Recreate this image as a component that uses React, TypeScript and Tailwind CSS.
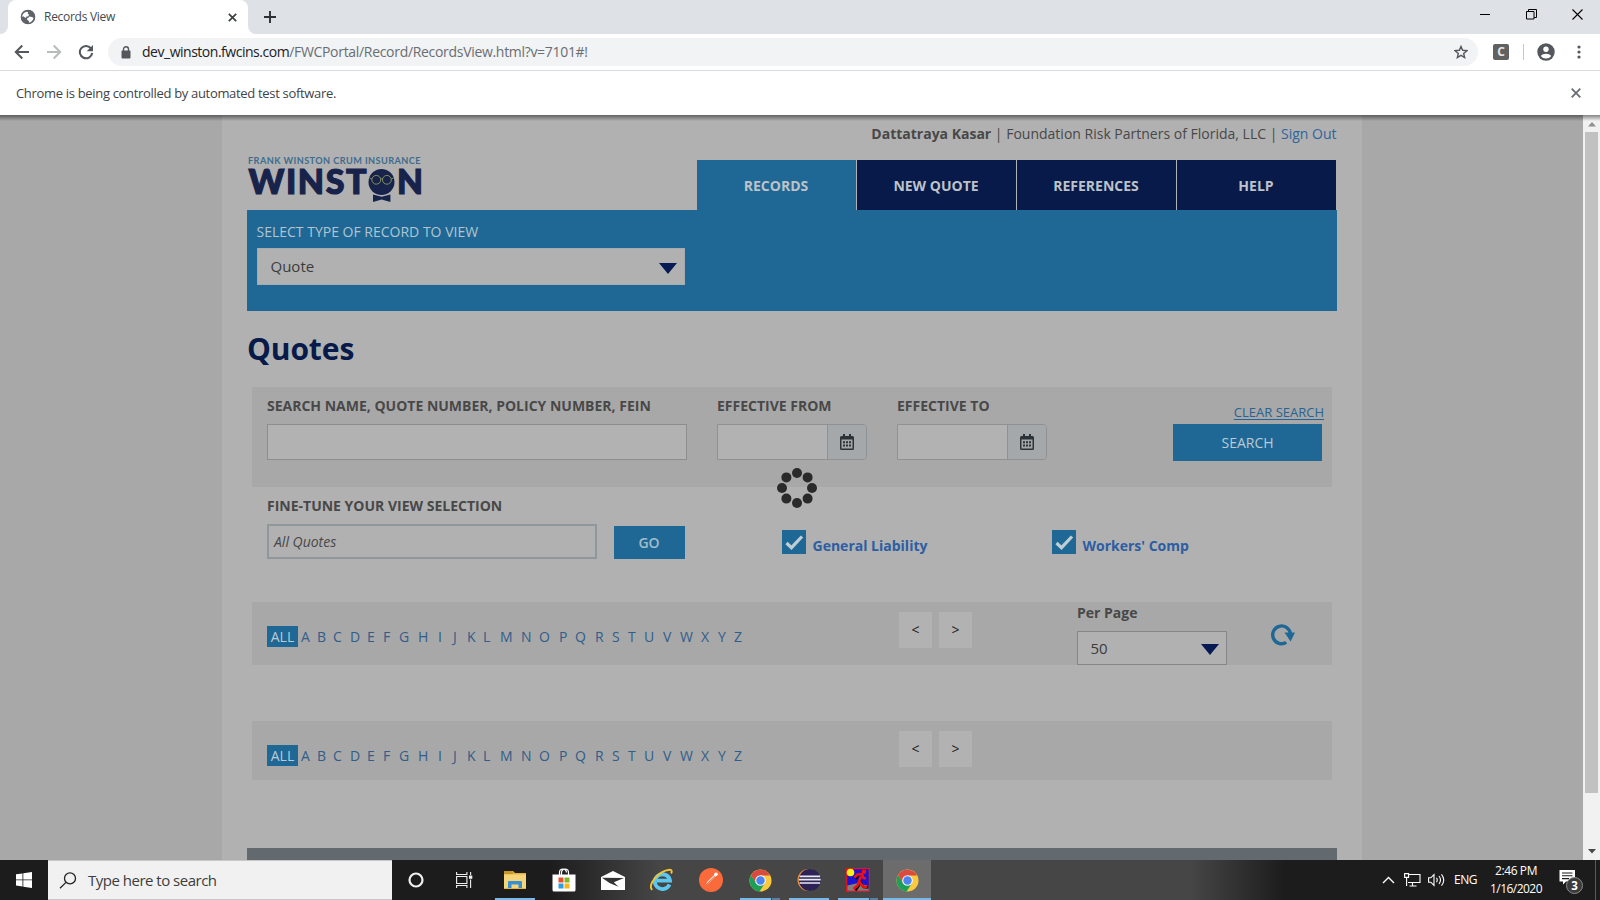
import type { ReactNode } from "react";

const LETTERS = "ABCDEFGHIJKLMNOPQRSTUVWXYZ".split("");

function TabStrip() {
  return (
    <div className="flex h-[34px] items-stretch bg-[#dee1e6]">
      <div className="flex w-2 items-end bg-white">
        <div className="h-full w-2 rounded-br-lg bg-[#dee1e6]" />
      </div>
      <div className="flex w-[240px] items-center rounded-t-lg bg-white pl-3 pr-2">
        <svg width="16" height="16" viewBox="0 0 16 16">
          <circle cx="8" cy="8" r="7" fill="#5f6368" />
          <path d="M3 4.6 6 2.7l2.2.2-.6 1.6L9 5.6l-.6 1.6-1.8.3-1 1.4-2.4-1.6L1.8 8 2 6z" fill="#fff" />
          <path d="M9.2 7.4 12 8l1.8 1-.8 2-2.2 2.2-1.6.9-.4-2.1-1.8-1.4.3-1.7 1.4-.4z" fill="#fff" />
          <circle cx="8" cy="8" r="6.6" fill="none" stroke="#5f6368" strokeWidth="1.4" />
        </svg>
        <span className="ml-2 text-[12px] tracking-[-0.28px] text-[#45494d]">Records View</span>
        <svg className="ml-auto mr-[3px]" width="9" height="9" viewBox="0 0 9 9" stroke="#3c4043" strokeWidth="1.7">
          <path d="M.8.8l7.4 7.4M8.2.8.8 8.2" />
        </svg>
      </div>
      <div className="flex w-2 bg-white">
        <div className="h-full w-2 rounded-bl-lg bg-[#dee1e6]" />
      </div>
      <div className="flex w-7 items-center justify-center">
        <svg width="12" height="12" viewBox="0 0 12 12" stroke="#2d3034" strokeWidth="1.9">
          <path d="M6 0v12M0 6h12" />
        </svg>
      </div>
      <div className="ml-auto flex items-start pt-[9px]">
        <svg className="mr-[36px]" width="10" height="11" stroke="#000" strokeWidth="1">
          <path d="M0 5.5h10" />
        </svg>
        <svg className="mr-[35px]" width="11" height="11" fill="none" stroke="#000" strokeWidth="1">
          <path d="M.5 2.5h7.500v7.500H.5zM2.500 2.500v-2h8v8H8" />
        </svg>
        <svg className="mr-[17px]" width="11" height="11" stroke="#000" strokeWidth="1.1">
          <path d="M.5.5l10 10M10.500.5l-10 10" />
        </svg>
      </div>
    </div>
  );
}

function Toolbar() {
  return (
    <div className="flex h-9 items-center bg-white pl-[14px]">
      <svg width="16" height="16" viewBox="0 0 16 16" fill="none" stroke="#54575b" strokeWidth="2">
        <path d="M15 8H2M8.300 1.500 1.800 8l6.500 6.500" />
      </svg>
      <svg className="ml-4" width="16" height="16" viewBox="0 0 16 16" fill="none" stroke="#b9bbbd" strokeWidth="2">
        <path d="M1 8h13M7.700 1.500 14.200 8l-6.500 6.500" />
      </svg>
      <svg className="ml-4" width="16" height="16" viewBox="0 0 16 16">
        <path d="M13.200 4.600A6.200 6.200 0 1 0 14.200 9" fill="none" stroke="#54575b" strokeWidth="2" />
        <path d="M15 1v6.300H8.700z" fill="#54575b" />
      </svg>
      <div className="ml-[14px] flex h-7 w-[1370px] items-center rounded-full bg-[#f1f3f4] pl-[13px] pr-[10px]">
        <svg width="10" height="13" viewBox="0 0 10 13">
          <rect x="0.500" y="4.500" width="9" height="8" rx="1" fill="#54575b" />
          <path d="M2.500 5V3.200a2.500 2.500 0 0 1 5 0V5" fill="none" stroke="#54575b" strokeWidth="1.400" />
        </svg>
        <div className="ml-[11px] pb-px whitespace-pre text-[14px]">
          <span className="tracking-[-0.48px] text-[#202124]">dev_winston.fwcins.com</span>
          <span className="tracking-[-0.31px] text-[#6a6e73]">/FWCPortal/Record/RecordsView.html?v=7101#!</span>
        </div>
        <svg className="ml-auto" width="14" height="14" viewBox="0 0 14 14" fill="none" stroke="#54575b" strokeWidth="1.400">
          <path d="M7 1.400l1.650 3.900 4.250.36-3.230 2.780.98 4.150L7 10.380l-3.650 2.210.98-4.150L1.100 5.660l4.250-.36z" />
        </svg>
      </div>
      <div className="ml-[15px] flex h-4 w-4 items-center justify-center rounded-[2px] bg-[#616161] text-[12px] leading-none font-bold text-[#e6e6e6]">
        C
      </div>
      <div className="ml-[14px] h-4 w-px bg-[#c6c9cc]" />
      <svg className="ml-[13px]" width="18" height="18" viewBox="0 0 18 18">
        <circle cx="9" cy="9" r="8.700" fill="#54575b" />
        <circle cx="9" cy="6.300" r="2.700" fill="#fff" />
        <path d="M3.800 12.900C5 11.400 7 10.700 9 10.700s4 .7 5.200 2.200A6.300 6.300 0 0 1 9 15.500a6.300 6.300 0 0 1-5.200-2.600z" fill="#fff" />
      </svg>
      <svg className="ml-[22px]" width="4" height="14" viewBox="0 0 4 14" fill="#54575b">
        <circle cx="2" cy="2" r="1.600" />
        <circle cx="2" cy="7" r="1.600" />
        <circle cx="2" cy="12" r="1.600" />
      </svg>
    </div>
  );
}

function InfoBar() {
  return (
    <div className="flex h-[45px] items-center border-t border-[#d9dbdd] bg-white pl-4 pr-[19px]">
      <span className="pt-[2px] text-[13px] tracking-[-0.32px] text-[#3f4246]">
        Chrome is being controlled by automated test software.
      </span>
      <svg className="ml-auto" width="10" height="10" viewBox="0 0 10 10" stroke="#6b6e72" strokeWidth="1.800">
        <path d="M.7.7l8.600 8.600M9.300.7.7 9.300" />
      </svg>
    </div>
  );
}

function Logo() {
  return (
    <svg width="176" height="48" viewBox="0 0 176 48">
      <text x="1" y="7.500" textLength="173" lengthAdjust="spacingAndGlyphs" fontFamily="Lato" fontWeight="700" fontSize="8.600" letterSpacing="0.400" fill="#3e6c8e">
        FRANK WINSTON CRUM INSURANCE
      </text>
      <g fontFamily="Lato" fontWeight="900" fontSize="34" fill="#18234b" stroke="#18234b" strokeWidth="1.200">
        <text x="1.500" y="37.500" textLength="118" lengthAdjust="spacing">
          WINST
        </text>
        <text x="150" y="37.500" textLength="26" lengthAdjust="spacingAndGlyphs">
          N
        </text>
      </g>
      <circle cx="134.500" cy="26" r="13" fill="#18234b" />
      <g fill="none" stroke="#8f9a5c" strokeWidth="0.900">
        <circle cx="129.300" cy="23.800" r="4.400" />
        <circle cx="139.900" cy="23.800" r="4.400" />
        <path d="M133.700 23.200q.9-.9 1.800 0M124.900 23.200l-2.600-1.500M144.300 23.200l2.600-1.500" />
      </g>
      <path d="M126 38.500l8.700 2.300 8.700-2.300V46l-8.700-2.400L126 46z" fill="#18234b" />
    </svg>
  );
}

function NavTab({ children, active = false }: { children: ReactNode; active?: boolean }) {
  return (
    <div
      className={
        active
          ? "flex h-[50px] w-[159px] items-center justify-center bg-[#1f6895] pt-px pr-px"
          : "flex h-[50px] w-[159px] items-center justify-center bg-[#071a49] pt-px pr-px"
      }
    >
      {children}
    </div>
  );
}

function Caret() {
  return (
    <svg width="18" height="11" viewBox="0 0 18 11">
      <path d="M0 0h18L9 11z" fill="#071a53" />
    </svg>
  );
}

function DateField({ label }: { label: string }) {
  return (
    <div className="w-[150px]">
      <div className="h-[37px] pt-[9px] font-bold whitespace-nowrap">{label}</div>
      <div className="flex h-9 overflow-hidden rounded-r-[4px] border border-[#8f9192]">
        <div className="w-[110px] border-r border-[#8f9192] bg-[#b2b2b2]" />
        <div className="flex flex-1 items-center justify-center bg-[#a5a8aa]">
          <svg className="mr-px" width="14" height="16" viewBox="0 0 14 16">
            <path d="M1.500 2h11A1.500 1.500 0 0 1 14 3.500v11a1.500 1.500 0 0 1-1.500 1.500h-11A1.500 1.500 0 0 1 0 14.500v-11A1.500 1.500 0 0 1 1.500 2zM3 0h2v3H3zM9 0h2v3H9z" fill="#2c3338" />
            <path d="M1.500 5.500h11v9h-11z" fill="#a4a7a9" />
            <path d="M3 7.200h2v2H3zM6 7.200h2v2H6zM9 7.200h2v2H9zM3 10.500h2v2H3zM6 10.500h2v2H6zM9 10.500h2v2H9z" fill="#2c3338" />
          </svg>
        </div>
      </div>
    </div>
  );
}

function CheckItem({ label }: { label: string }) {
  return (
    <div className="flex w-[270px] items-start">
      <div className="flex h-6 w-6 items-center justify-center bg-[#1f6895]">
        <svg width="19" height="15" viewBox="0 0 19 15" fill="none" stroke="#c0cdd4" strokeWidth="3.200">
          <path d="M1.500 8l5 4.700L17 1.500" />
        </svg>
      </div>
      <span className="ml-[6.500px] pt-[6px] font-bold text-[#2d5da3]">{label}</span>
    </div>
  );
}

function Alphabet() {
  return (
    <div className="flex h-[21px] items-center">
      <div className="flex h-[21px] w-[31px] items-center justify-center bg-[#1f6895] text-[#bccad3]">ALL</div>
      <div className="ml-[3px] grid grid-cols-[16px_16px_17px_17px_16px_16px_19px_20px_15px_14px_16px_17px_21px_18px_20px_16px_20px_17px_16px_16px_19px_17px_21px_17px_16px_12px] text-[#315d8a]">
        {LETTERS.map((l) => (
          <span key={l}>{l}</span>
        ))}
      </div>
    </div>
  );
}

function Pager() {
  return (
    <div className="flex gap-[7px] text-[#222]">
      <div className="flex h-9 w-[33px] items-center justify-center bg-[#b2b2b2]">&lt;</div>
      <div className="flex h-9 w-[33px] items-center justify-center bg-[#b2b2b2]">&gt;</div>
    </div>
  );
}

function Spinner() {
  return (
    <svg className="absolute top-[353px] left-[777px]" width="40" height="40" viewBox="-20 -20 40 40" fill="#2a2a2a">
      {[0, 45, 90, 135, 180, 225, 270, 315].map((a) => (
        <circle key={a} cx="0" cy="-15" r="5" transform={`rotate(${a})`} />
      ))}
    </svg>
  );
}

function Page() {
  return (
    <div className="relative flex h-[745px] overflow-hidden bg-[#a8a8a8] text-[14px] leading-[20px] text-[#484848]">
      <div className="ml-[222px] w-[1140px] bg-[#b1b1b1] pl-[25px]">
        <div className="w-[1090px]">
          <div className="flex h-[95px]">
            <div className="pt-[41px]">
              <Logo />
            </div>
            <div className="ml-auto flex flex-col items-end">
              <div className="h-[45px] pt-[9px] pr-[0.500px] whitespace-pre">
                <b>Dattatraya Kasar</b> | Foundation Risk Partners of Florida, LLC |{" "}
                <span className="text-[#2f659c]">Sign Out</span>
              </div>
              <div className="mr-px flex gap-px font-bold text-[#bdc2c9]">
                <NavTab active>RECORDS</NavTab>
                <NavTab>NEW QUOTE</NavTab>
                <NavTab>REFERENCES</NavTab>
                <NavTab>HELP</NavTab>
              </div>
            </div>
          </div>

          <div className="h-[101px] bg-[#1f6895] pt-3 pl-[9px]">
            <div className="pl-[0.500px] text-[#b4c4ce]">SELECT TYPE OF RECORD TO VIEW</div>
            <div className="mt-[6px] ml-px flex h-[37px] w-[428px] items-center border border-[#a5abae] bg-[#b1b1b1] pr-[7px] pl-[12.500px] text-[15px] text-[#3c3c3c]">
              <span className="pb-px">Quote</span>
              <span className="ml-auto pt-[3px]">
                <Caret />
              </span>
            </div>
          </div>

          <h1 className="h-[76px] pt-[18px] text-[30px] leading-[40px] font-bold tracking-[-0.100px] text-[#071a49]">
            Quotes
          </h1>

          <div className="mx-[5px]">
            <div className="flex h-[100px] bg-[#a8a8a8] pl-[15px]">
              <div className="w-[420px]">
                <div className="h-[37px] pt-[9px] font-bold whitespace-nowrap">
                  SEARCH NAME, QUOTE NUMBER, POLICY NUMBER, FEIN
                </div>
                <div className="h-9 border border-[#8b8d8e] bg-[#b2b2b2]" />
              </div>
              <div className="ml-[30px] flex gap-[30px]">
                <DateField label="EFFECTIVE FROM" />
                <DateField label="EFFECTIVE TO" />
              </div>
              <div className="mr-[8px] ml-auto flex flex-col items-end">
                <div className="h-[37px] pt-[15px] text-[13px] text-[#276393] underline underline-offset-2">CLEAR SEARCH</div>
                <div className="mr-[2px] flex h-[37px] w-[149px] items-center justify-center bg-[#1f6895] text-[#bccad3]">
                  SEARCH
                </div>
              </div>
            </div>

            <div className="flex h-[115px] pl-[15px]">
              <div className="w-[330px]">
                <div className="h-[37px] pt-[9px] font-bold">FINE-TUNE YOUR VIEW SELECTION</div>
                <div className="flex h-[35px] items-center border-2 border-[#90979a] pt-px pl-[5px] italic">All Quotes</div>
              </div>
              <div className="mt-[39px] ml-[17px] flex h-[33px] w-[71px] items-center justify-center bg-[#1f6895] pr-px font-semibold text-[#a3bccb]">
                GO
              </div>
              <div className="ml-[97px] flex pt-[43px]">
                <CheckItem label="General Liability" />
                <CheckItem label="Workers' Comp" />
              </div>
            </div>

            <div className="flex h-[63px] bg-[#a8a8a8] pl-[15px]">
              <div className="w-[632px] pt-6">
                <Alphabet />
              </div>
              <div className="pt-[10px]">
                <Pager />
              </div>
              <div className="ml-[105px] w-[150px]">
                <div className="h-[29px] pt-[1px] font-bold">Per Page</div>
                <div className="flex h-[34px] items-center border border-[#858788] bg-[#b1b1b1] pr-[7px] pl-[12.500px] text-[15px] text-[#3c3c3c]">
                  <span>50</span>
                  <span className="ml-auto pt-[2px]">
                    <Caret />
                  </span>
                </div>
              </div>
              <svg className="mt-[21px] ml-[43px]" width="26" height="24" viewBox="0 0 26 24">
                <path d="M16.300 19.400A8.900 8.900 0 1 1 20.400 10.500" fill="none" stroke="#1f6895" strokeWidth="3.400" />
                <path d="M14.500 9.500H25L20.600 18.500z" fill="#1f6895" />
              </svg>
            </div>

            <div className="mt-14 flex h-[59px] bg-[#a8a8a8] pl-[15px]">
              <div className="w-[632px] pt-6">
                <Alphabet />
              </div>
              <div className="pt-[10px]">
                <Pager />
              </div>
            </div>
          </div>

          <div className="mt-[68px] h-[12px] bg-[#626a70]" />
        </div>
      </div>

      <div className="ml-auto flex w-[17px] flex-col items-center bg-[#f1f1f1]">
        <svg className="mt-[7px]" width="8" height="5">
          <path d="M4 0l4 4.500H0z" fill="#8f8f8f" />
        </svg>
        <div className="mt-[5px] h-[661px] w-[13px] bg-[#c1c1c1]" />
        <svg className="mt-auto mb-[6px]" width="8" height="5">
          <path d="M0 0h8L4 4.500z" fill="#4a4a4a" />
        </svg>
      </div>

      <div className="absolute inset-x-0 top-0 h-[6px] bg-gradient-to-b from-black/45 to-transparent" />
      <Spinner />
    </div>
  );
}

function ChromeIcon() {
  return (
    <svg width="23" height="23" viewBox="0 0 24 24">
      <circle cx="12" cy="12" r="11.500" fill="#fbc93d" />
      <path d="M2.040 6.250A11.500 11.500 0 0 0 11 23.450L16.800 14.500 7.500 14.500z" fill="#1c9f58" />
      <path d="M2.040 6.250L7.200 14.500 12 6.800 21.960 6.800A11.500 11.500 0 0 0 2.040 6.250z" fill="#db4a3f" />
      <circle cx="12" cy="12" r="5.600" fill="#f4f4f4" />
      <circle cx="12" cy="12" r="4.400" fill="#4a84f0" />
    </svg>
  );
}

function AppSlot({ children, line, active = false }: { children: ReactNode; line?: "full" | "stack"; active?: boolean }) {
  return (
    <div className={active ? "flex h-10 w-12 flex-col bg-[#6c6c6c]" : "flex h-10 w-12 flex-col"}>
      <div className="flex h-[38px] items-center justify-center pt-[2px]">{children}</div>
      {line && (
        <div className={active ? "flex h-[2px]" : "mx-1 flex h-[2px] gap-px"}>
          <div className="flex-1 bg-[#76b9ed]" />
          {line === "stack" && <div className="w-2 bg-[#5583a5]" />}
        </div>
      )}
    </div>
  );
}

function Taskbar() {
  return (
    <div className="flex h-10 items-center bg-[linear-gradient(90deg,#1c1c1c_0,#1c1c1c_550px,#464646_660px,#464646_1190px,#1c1c1c_1285px,#1c1c1c_1600px)] text-white">
      <div className="flex h-10 w-12 items-center justify-center">
        <svg width="16" height="16" viewBox="0 0 16 16" fill="#fff">
          <path d="M0 2.300l6.500-.9v6.100H0zM7.300 1.300L16 0v7.500H7.300zM0 8.300h6.500v6.200L0 13.600zM7.300 8.300H16V16l-8.700-1.300z" />
        </svg>
      </div>
      <div className="flex h-10 w-[344px] items-center border-y border-[#c8c8c8] bg-[#f1f1f1] pl-[11px]">
        <svg width="18" height="17" viewBox="0 0 18 17" fill="none" stroke="#222" strokeWidth="1.300">
          <circle cx="11" cy="6.400" r="5.500" />
          <path d="M7 10.400L1 16.200" />
        </svg>
        <span className="ml-[11px] text-[15px] tracking-[-0.500px] text-[#3d3d3d]">Type here to search</span>
      </div>
      <div className="flex h-10 w-12 items-center justify-center">
        <svg width="16" height="16" viewBox="0 0 16 16">
          <circle cx="8" cy="8" r="6.500" fill="none" stroke="#f0f0f0" strokeWidth="2.200" />
        </svg>
      </div>
      <div className="flex h-10 w-12 items-center justify-center">
        <svg width="17" height="16" viewBox="0 0 17 16" fill="none" stroke="#f0f0f0" strokeWidth="1.100">
          <path d="M.6 4.500h10.300v7H.6zM.6 0v2.500h10.300V0M.6 16v-2.500h10.300V16M14.600 0v3M14.600 7.500V16" />
          <path d="M13 3.500h3.300v3.300H13z" fill="#f0f0f0" stroke="none" />
        </svg>
      </div>
      <div className="ml-[3px] flex gap-px">
        <AppSlot line="full">
          <svg width="22" height="20" viewBox="0 0 22 20">
            <path d="M0 1h9l2 2h11v16H0z" fill="#e3b341" />
            <path d="M0 4.500h22V18H0z" fill="#f6d47a" />
            <path d="M0 1h8l1.500 2L8 4H0z" fill="#c9962a" />
            <path d="M4 12q0-1 1-1h12q1 0 1 1v6h-3.500v-3.500h-7V18H4z" fill="#3a8fd0" />
          </svg>
        </AppSlot>
        <AppSlot>
          <svg width="24" height="24" viewBox="0 0 24 24">
            <path d="M7.500 7V4.500a3.500 3.500 0 0 1 7 0M9.500 7V4.500a3.500 3.500 0 0 1 7 0V7" fill="none" stroke="#fff" strokeWidth="1.200" />
            <path d="M.5 6.500h23V22q0 1.500-1.500 1.500H2Q.5 23.500.5 22z" fill="#fff" />
            <path d="M6.500 9.500h5v5h-5z" fill="#e8502f" />
            <path d="M12.500 9.500h5v5h-5z" fill="#7db728" />
            <path d="M6.500 15.500h5v5h-5z" fill="#2b9fe0" />
            <path d="M12.500 15.500h5v5h-5z" fill="#f8b61c" />
          </svg>
        </AppSlot>
        <AppSlot>
          <svg width="24" height="19" viewBox="0 0 24 19">
            <path d="M0 6L12 0l12 6v13H0z" fill="#fff" />
            <path d="M1 6.800l22 .2-10.200 4.200 4.700 4.600L8.500 12z" fill="#333" />
          </svg>
        </AppSlot>
        <AppSlot>
          <svg width="24" height="24" viewBox="0 0 24 24">
            <path d="M19.500 16.500A7.600 7.400 0 1 1 20 12.600H7" fill="none" stroke="#5cc8ef" strokeWidth="3.800" />
            <path d="M2.200 21.800C-2.500 17 8 2.800 19.500 1.700c2.500-.1 2.600 1.800 1.600 3.800" fill="none" stroke="#f2c333" strokeWidth="1.900" />
          </svg>
        </AppSlot>
        <AppSlot>
          <svg width="24" height="24" viewBox="0 0 24 24">
            <circle cx="12" cy="12" r="12" fill="#fb6a3a" />
            <path d="M6 18l2.500-4.500 7-7 1.500 1.800-7.500 7.200z" fill="#fdd9cb" />
            <circle cx="17" cy="6.300" r="1.800" fill="#fff" />
            <path d="M6.500 17.500L16 8.500" stroke="#c44f27" strokeWidth="0.800" />
          </svg>
        </AppSlot>
        <AppSlot line="stack">
          <ChromeIcon />
        </AppSlot>
        <AppSlot line="full">
          <svg width="24" height="24" viewBox="0 0 24 24">
            <circle cx="11.500" cy="12" r="11" fill="#f0943a" />
            <circle cx="12.800" cy="12" r="11" fill="#2c2255" />
            <path d="M2.500 8.300h20.600M1.900 11.700h21.800M2.500 15h20.600" stroke="#e9e9f2" strokeWidth="1.700" />
          </svg>
        </AppSlot>
        <AppSlot line="stack">
          <svg width="24" height="24" viewBox="0 0 24 24">
            <path d="M.7.700h22.600v22.600H.7z" fill="#1c14cf" stroke="#e01818" strokeWidth="1.300" />
            <path d="M1.300 17.500L12 15l10.700 3v4.700H1.300z" fill="#857d78" />
            <circle cx="4.500" cy="4.500" r="3.800" fill="#ffee1a" />
            <path d="M9.500 22.500l3.500-5 2-6M14.500 14.500l3 4.500 5 .5M9.500 11l3-3.500" fill="none" stroke="#111" strokeWidth="2.400" />
            <path d="M7.500 21l4-3.500 3.500-9M13.500 14l3.500 4.500 4 .5M8.500 9.500l3-3 4.500-.5 1.500 4 2.500.5" fill="none" stroke="#f01212" strokeWidth="2.500" />
            <circle cx="18" cy="3.800" r="2.300" fill="#f01212" />
          </svg>
        </AppSlot>
        <AppSlot line="full" active>
          <ChromeIcon />
        </AppSlot>
      </div>

      <svg className="ml-auto" width="13" height="8" viewBox="0 0 13 8" fill="none" stroke="#fff" strokeWidth="1.400">
        <path d="M1 7l5.500-5.500L12 7" />
      </svg>
      <svg className="ml-[9px]" width="17" height="14" viewBox="0 0 17 14" fill="none" stroke="#fff" strokeWidth="1.100">
        <path d="M5 1.500h11v8H4M8.500 9.500v3M5.500 13h7" />
        <path d="M.6.600h4v3.800h-4zM2.600 4.400V13" />
      </svg>
      <svg className="ml-[7px]" width="17" height="14" viewBox="0 0 17 14" fill="none" stroke="#fff" strokeWidth="1.100">
        <path d="M.6 4.800h2.200L6 1.600v10.800L2.800 9.200H.6zM8.500 4.800q1.500 2.200 0 4.400M11 3q3 4 0 8M13.500 1.300q4.500 5.700 0 11.400" />
      </svg>
      <span className="ml-[9px] w-[23px] text-[12px] tracking-[-0.450px]">ENG</span>
      <div className="ml-[12px] flex w-[54px] flex-col items-center text-[12px] leading-[18px] whitespace-nowrap">
        <span className="tracking-[-0.400px]">2:46 PM</span>
        <span className="tracking-[-0.530px]">1/16/2020</span>
      </div>
      <svg className="mt-1 mr-[11px] ml-[15px]" width="26" height="26" viewBox="0 0 26 26">
        <path d="M1.500 1h15.500v11.500H8l-3 3v-3H1.500z" fill="#fff" />
        <path d="M4 4h10.500M4 6.800h10.500M4 9.600h7" stroke="#1c1c1c" strokeWidth="1.100" />
        <circle cx="16.500" cy="16.500" r="8" fill="#3b3b3b" stroke="#8b8b8b" strokeWidth="1" />
        <text x="16.500" y="20.500" textAnchor="middle" fontFamily="Open Sans" fontWeight="700" fontSize="11.500" fill="#fff">
          3
        </text>
      </svg>
      <div className="mr-[4px] h-10 w-px bg-[#5a5a5a]" />
    </div>
  );
}

export default function App() {
  return (
    <div className="h-[900px] w-[1600px] overflow-hidden font-['Open_Sans','Noto_Sans',sans-serif]">
      <TabStrip />
      <Toolbar />
      <InfoBar />
      <Page />
      <Taskbar />
    </div>
  );
}
